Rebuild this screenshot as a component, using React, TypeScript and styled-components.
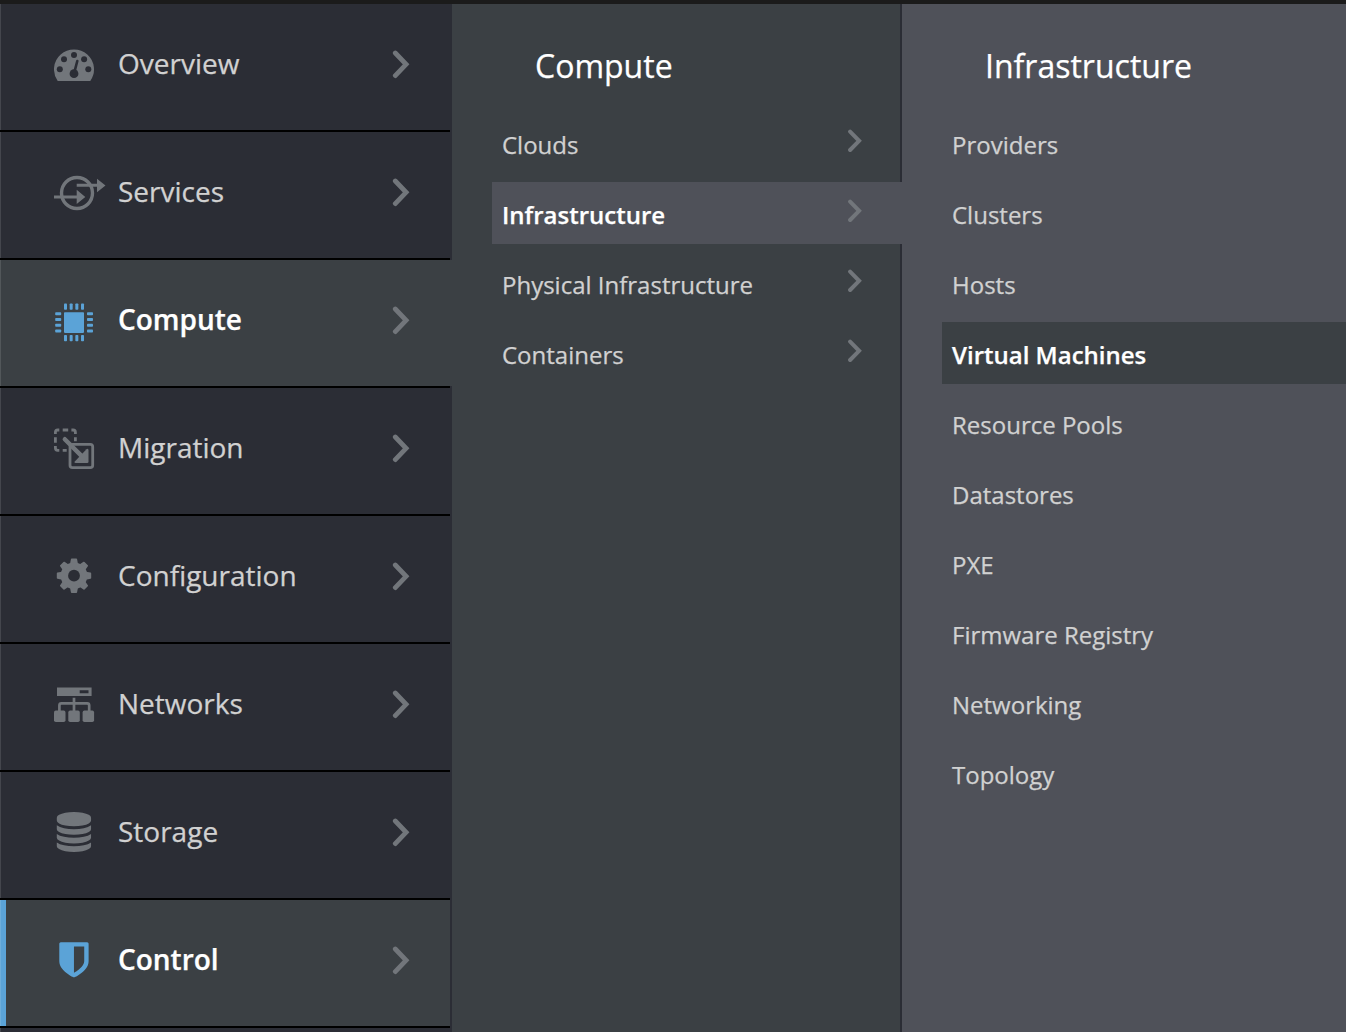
import React from 'react';
import styled, { createGlobalStyle, css } from 'styled-components';

const color = {
  masthead: '#1b1b1b',
  primary: '#2b2d35',
  secondary: '#3b4044',
  tertiary: '#4f5159',
  icon: '#72767b',
  text: '#d1d1d1',
  accent: '#5ba3d7',
};

const GlobalStyle = createGlobalStyle`
  * { box-sizing: border-box; }
  body {
    margin: 0;
    background: ${color.tertiary};
    font-family: 'Open Sans', 'Noto Sans', sans-serif;
    -webkit-text-stroke: 0.25px currentColor;
    overflow: hidden;
  }
  ul { list-style: none; margin: 0; padding: 0; }
`;

const Page = styled.div`
  display: flex;
  flex-direction: column;
  height: 1032px;
  overflow: hidden;
`;

const Masthead = styled.div`
  flex: 0 0 4px;
  background: ${color.masthead};
`;

const Columns = styled.div`
  display: flex;
  flex: 1;
  min-height: 0;
`;

const Primary = styled.ul`
  flex: 0 0 452px;
  background: ${color.primary};
  box-shadow: inset 1px 0 rgba(255, 255, 255, 0.12);
`;

const PrimaryItem = styled.li<{ $active?: boolean; $open?: boolean; $marked?: boolean }>`
  display: flex;
  align-items: flex-start;
  width: ${p => (p.$open ? 452 : 450)}px;
  height: 126px;
  margin-bottom: 2px;
  padding: 40px 0 0 54px;
  background: ${p => (p.$active ? color.secondary : color.primary)};
  box-shadow: inset 1px 0 rgba(255, 255, 255, 0.12)
    ${p => p.$marked && css`, inset 6px 0 ${color.accent}`},
    ${p => (p.$open ? '-2px' : '0')} 2px #000;
  color: ${p => (p.$active ? color.accent : color.icon)};
`;

const PrimaryLabel = styled.span<{ $active?: boolean }>`
  width: 274px;
  margin-left: 12px;
  line-height: 38px;
  font-size: 28px;
  font-weight: ${p => (p.$active ? 600 : 400)};
  color: ${p => (p.$active ? '#fff' : color.text)};
  white-space: nowrap;
`;

const IconSvg = styled.svg`
  flex: none;
  width: 52px;
  height: 44px;
  fill: currentColor;
`;

const ChevronSvg = styled.svg<{ $small?: boolean }>`
  flex: none;
  width: ${p => (p.$small ? 14 : 18)}px;
  height: ${p => (p.$small ? 24 : 29)}px;
  margin-top: ${p => (p.$small ? -4 : 6)}px;
  fill: none;
  stroke: ${color.icon};
  stroke-linecap: round;
`;

const Panel = styled.section<{ $tone: 'secondary' | 'tertiary' }>`
  flex: ${p => (p.$tone === 'secondary' ? '0 0 450px' : '1')};
  min-width: 0;
  padding-left: 40px;
  background: ${p => color[p.$tone]};
  border-right: ${p => (p.$tone === 'secondary' ? `2px solid ${color.primary}` : 'none')};
`;

const PanelTitle = styled.h2`
  margin: 0;
  padding: 40px 0 0 43px;
  height: 108px;
  font-size: 32px;
  line-height: 44px;
  font-weight: 400;
  color: #fff;
`;

const PanelList = styled.ul`
  display: flex;
  flex-direction: column;
  gap: 8px;
`;

const PanelItem = styled.li<{ $active?: boolean; $fill: string; $bleed?: boolean }>`
  display: flex;
  justify-content: space-between;
  align-items: flex-start;
  height: 62px;
  margin-right: ${p => (p.$bleed ? -2 : 0)}px;
  padding: 21px ${p => (p.$bleed ? 40 : 38)}px 0 10px;
  background: ${p => (p.$active ? p.$fill : 'transparent')};
  font-size: 24px;
  line-height: 24px;
  font-weight: ${p => (p.$active ? 600 : 400)};
  color: ${p => (p.$active ? '#fff' : color.text)};
  white-space: nowrap;
`;

const Chevron = ({ small }: { small?: boolean }) =>
  small ? (
    <ChevronSvg $small viewBox="0 0 14 24" strokeWidth="4">
      <path d="M2.1 2.6 11.1 11.8 2.1 21" />
    </ChevronSvg>
  ) : (
    <ChevronSvg viewBox="0 0 18 29" strokeWidth="4.8">
      <path d="M3.3 3 14.1 14.3 3.3 25.6" />
    </ChevronSvg>
  );

const band =
  'q237 0 443-43t325-127v170q0 69-103 128t-280 93.5-385 34.5-385-34.5-280-93.5-103-128v-170q119 84 325 127t443 43z';

const icons: Record<string, React.ReactNode> = {
  Overview: (
    <>
      <path d="M3.7 37A20 20 0 1 1 36.3 37Z" />
      <g fill={color.primary}>
        <circle cx="5.8" cy="25.3" r="3" />
        <circle cx="10" cy="15.3" r="3" />
        <circle cx="20" cy="11" r="3" />
        <circle cx="30.1" cy="15.3" r="3" />
        <circle cx="34.3" cy="25.3" r="3" />
        <circle cx="20" cy="29.7" r="4.4" />
        <path d="M20 29.7 23.3 17" stroke={color.primary} strokeWidth="2.6" strokeLinecap="round" />
      </g>
    </>
  ),
  Services: (
    <>
      <circle cx="23" cy="21" r="15.5" fill="none" stroke="currentColor" strokeWidth="3.4" />
      <path d="M0 23.6h22.7V17.8L31.3 25l-8.6 6.9v-5.3H0ZM22.7 11.8H43V6.7l8.5 6.7L43 20.3v-5.5H22.7Z" />
    </>
  ),
  Compute: (
    <>
      <rect x="10" y="12.3" width="20" height="20.6" rx="0.8" />
      {[0, 1, 2, 3].map(i => (
        <React.Fragment key={i}>
          <rect x={10 + i * 5.67} y="3.4" width="3" height="6.4" rx="0.8" />
          <rect x={10 + i * 5.67} y="35" width="3" height="6.2" rx="0.8" />
          <rect x="1.2" y={12.2 + i * 5.75} width="6" height="3" rx="0.8" />
          <rect x="33" y={12.2 + i * 5.75} width="6" height="3" rx="0.8" />
        </React.Fragment>
      ))}
    </>
  ),
  Migration: (
    <>
      <g fill="none" stroke="currentColor" strokeWidth="2.8">
        <path d="M1.4 6V4.2Q1.4 2 3.6 2H5.3M8.7 2h5.5M17.4 2h1.7Q21.4 2 21.4 4.2V6M1.4 9.3v5.4M21.4 9.3v4M1.4 18v2.1Q1.4 22.3 3.6 22.3h1.7M8.7 22.3h4" />
        <rect x="16" y="16.4" width="22.7" height="23.2" rx="2.4" />
        <path d="M10.8 11.2 28 28.4" strokeWidth="4.4" strokeLinecap="round" />
      </g>
      <path d="M34.5 22v11.8q0 1.3-1.3 1.3H21.5q-1.8-.3-.7-1.7L32.5 21.3q1.4-1.2 2 .7Z" />
    </>
  ),
  Configuration: (
    <>
      {[0, 45, 90, 135].map(a => (
        <path
          key={a}
          d="M16.9 3.2q.1-.7.8-.7h4.6q.7 0 .8.7L24 8v23.4l-.9 4.8q-.1.7-.8.7h-4.6q-.7 0-.8-.7L16 31.4V8Z"
          transform={`rotate(${a} 20 19.7)`}
        />
      ))}
      <circle cx="20" cy="19.7" r="9.6" fill="none" stroke="currentColor" strokeWidth="7.4" />
      <circle cx="20" cy="19.7" r="5.9" fill={color.primary} />
    </>
  ),
  Networks: (
    <>
      <path fillRule="evenodd" d="M3 3.4h34.6v8.7H3ZM25.7 6.3v3h8.8v-3Z" />
      <path
        d="M20 13.8V28M5.4 28v-6.6q0-2 2-2h25.8q2 0 2 2V28"
        fill="none"
        stroke="currentColor"
        strokeWidth="2.7"
      />
      <rect x="0" y="26.6" width="11.5" height="11.5" rx="1.8" />
      <rect x="14.3" y="26.6" width="11.5" height="11.5" rx="1.8" />
      <rect x="28.6" y="26.6" width="11.5" height="11.5" rx="1.8" />
    </>
  ),
  Storage: (
    <path
      transform="translate(2.8 0) scale(0.0223)"
      d={`M768 768${band}M768 1536${band}M768 1152${band}M768 0q208 0 385 34.5t280 93.5 103 128v128q0 69-103 128t-280 93.5-385 34.5-385-34.5-280-93.5-103-128v-128q0-69 103-128t280-93.5 385-34.5z`}
    />
  ),
  Control: (
    <path
      transform="translate(5.3 2.2) scale(0.0229)"
      d="M1088 832v-640h-448v1137q119-63 213-137 235-184 235-360zm192-768v768q0 86-33.5 170.5t-83 150-118 127.5-126.5 103-121 77.5-89.5 49.5-42.5 20q-12 6-26 6t-26-6q-16-7-42.5-20t-89.5-49.5-121-77.5-126.5-103-118-127.5-83-150-33.5-170.5v-768q0-26 19-45t45-19h1152q26 0 45 19t19 45z"
    />
  ),
};

const primaryItems = [
  { name: 'Overview' },
  { name: 'Services' },
  { name: 'Compute', active: true, open: true },
  { name: 'Migration' },
  { name: 'Configuration' },
  { name: 'Networks' },
  { name: 'Storage' },
  { name: 'Control', active: true, marked: true },
];

const computeItems = ['Clouds', 'Infrastructure', 'Physical Infrastructure', 'Containers'];

const infrastructureItems = [
  'Providers',
  'Clusters',
  'Hosts',
  'Virtual Machines',
  'Resource Pools',
  'Datastores',
  'PXE',
  'Firmware Registry',
  'Networking',
  'Topology',
];

export default function App() {
  return (
    <Page>
      <GlobalStyle />
      <Masthead />
      <Columns>
        <Primary>
          {primaryItems.map(({ name, active, open, marked }) => (
            <PrimaryItem key={name} $active={active} $open={open} $marked={marked}>
              <IconSvg viewBox="0 0 52 44">{icons[name]}</IconSvg>
              <PrimaryLabel $active={active}>{name}</PrimaryLabel>
              <Chevron />
            </PrimaryItem>
          ))}
        </Primary>
        <Panel $tone="secondary">
          <PanelTitle>Compute</PanelTitle>
          <PanelList>
            {computeItems.map(name => (
              <PanelItem
                key={name}
                $active={name === 'Infrastructure'}
                $bleed={name === 'Infrastructure'}
                $fill={color.tertiary}
              >
                {name}
                <Chevron small />
              </PanelItem>
            ))}
          </PanelList>
        </Panel>
        <Panel $tone="tertiary">
          <PanelTitle>Infrastructure</PanelTitle>
          <PanelList>
            {infrastructureItems.map(name => (
              <PanelItem key={name} $active={name === 'Virtual Machines'} $fill={color.secondary}>
                {name}
              </PanelItem>
            ))}
          </PanelList>
        </Panel>
      </Columns>
    </Page>
  );
}
